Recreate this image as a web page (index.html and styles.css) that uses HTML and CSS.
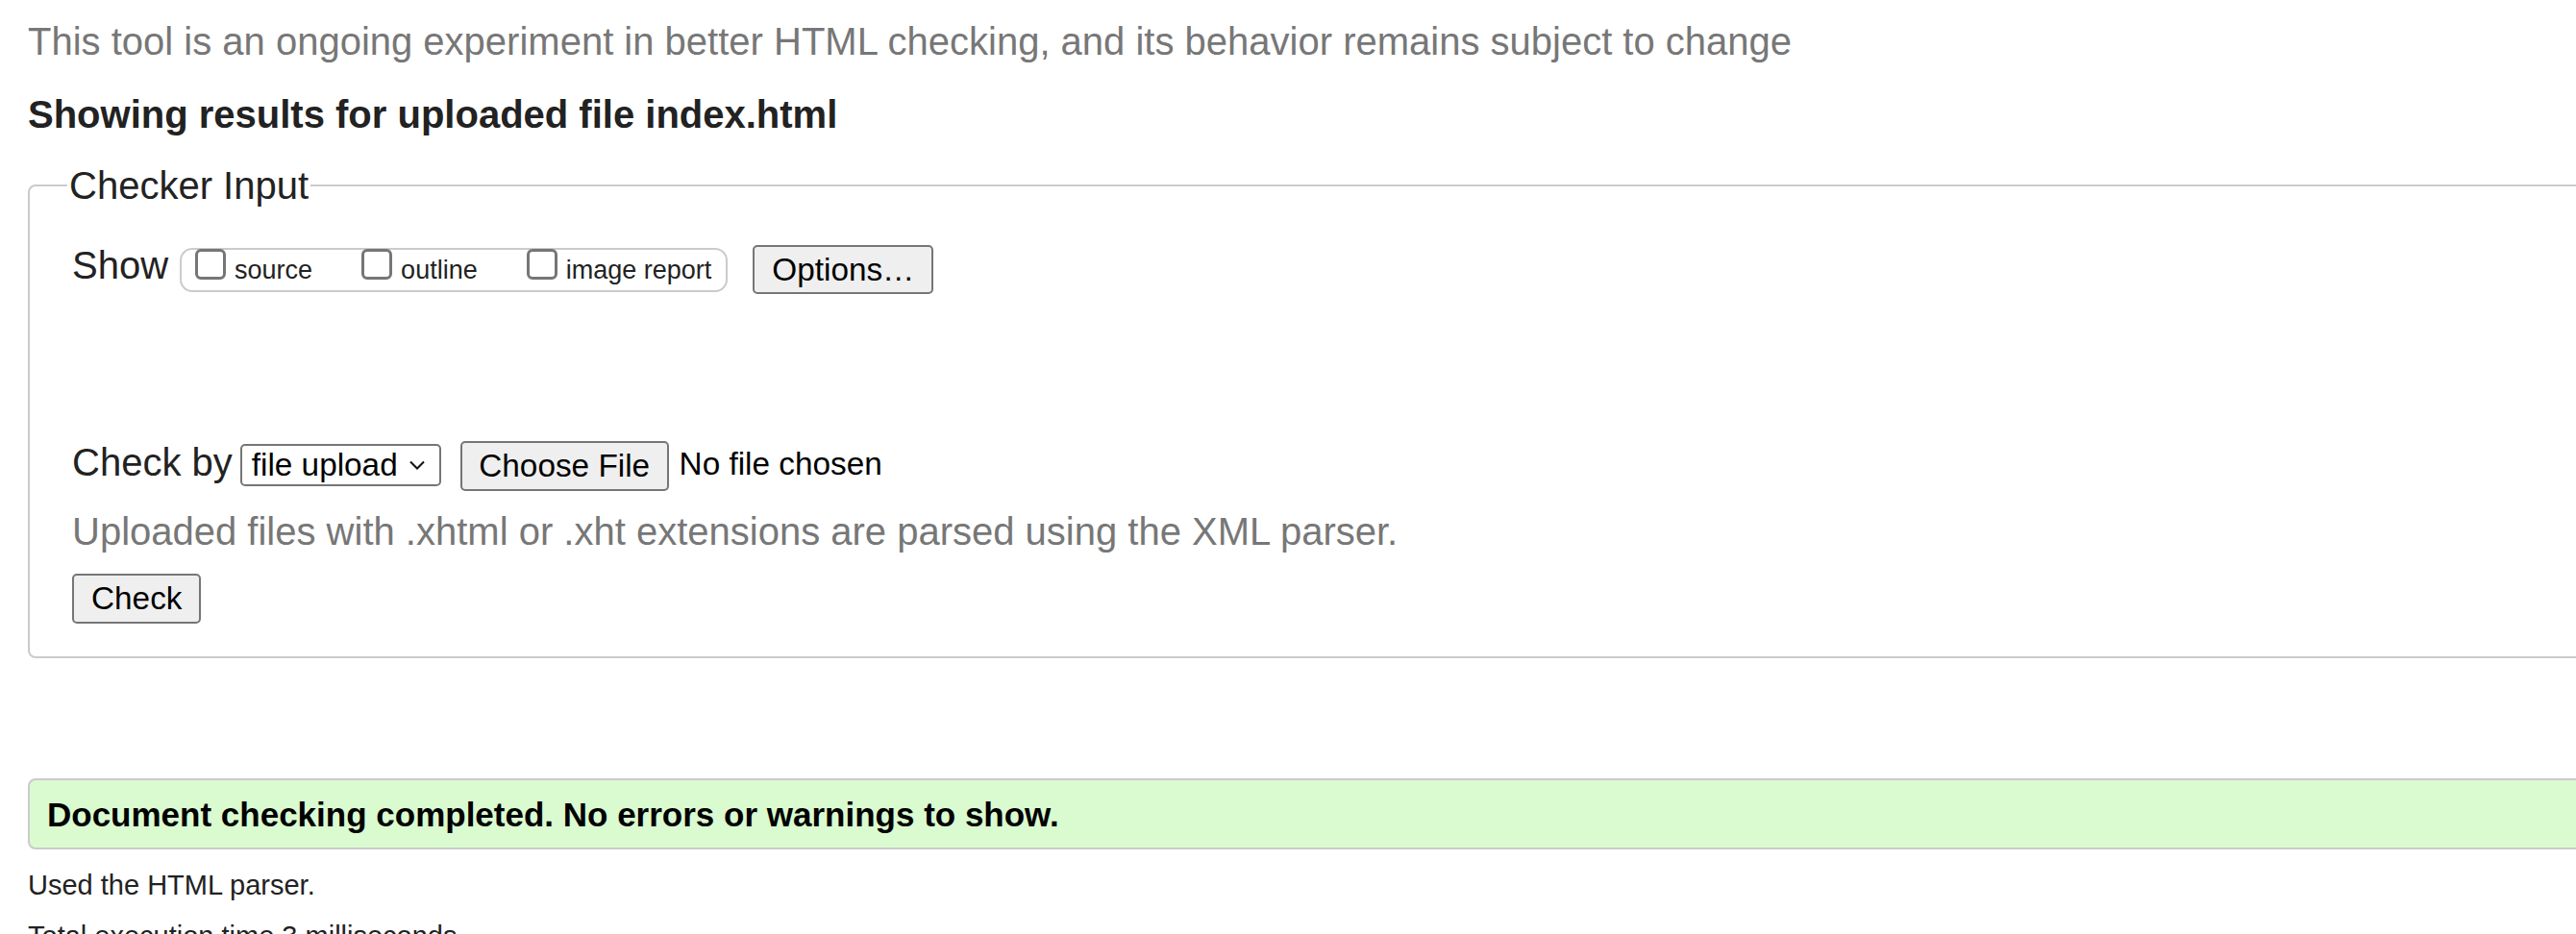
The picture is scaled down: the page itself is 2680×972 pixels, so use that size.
FILE: index.html
```html
<!DOCTYPE html>
<html lang="en">
<head>
<meta charset="utf-8">
<title>Nu Html Checker</title>
<link rel="stylesheet" href="styles.css">
</head>
<body>
<p class="experiment">This tool is an ongoing experiment in better HTML checking, and its behavior remains subject to change</p>
<h2 class="results-title">Showing results for uploaded file index.html</h2>
<form class="checker-form">
  <fieldset class="checker">
    <legend class="checker-legend">Checker Input</legend>
    <div class="show-row">
      <span class="row-label">Show</span>
      <span class="toggles">
        <label class="toggle"><input type="checkbox" class="box"><span class="toggle-text">source</span></label>
        <label class="toggle"><input type="checkbox" class="box"><span class="toggle-text">outline</span></label>
        <label class="toggle"><input type="checkbox" class="box"><span class="toggle-text">image report</span></label>
      </span>
      <button type="button" class="btn btn-options">Options…</button>
    </div>
    <div class="checkby-row">
      <span class="row-label">Check by</span>
      <span class="select">
        <span class="select-text">file upload</span>
        <svg class="chevron" width="16" height="10" viewBox="0 0 16 10"><polyline points="1,1.5 8,8.5 15,1.5" fill="none" stroke="#111" stroke-width="2"/></svg>
      </span>
      <button type="button" class="btn btn-file">Choose File</button>
      <span class="file-status">No file chosen</span>
    </div>
    <p class="hint">Uploaded files with .xhtml or .xht extensions are parsed using the XML parser.</p>
    <button type="button" class="btn btn-check">Check</button>
  </fieldset>
</form>
<div class="success">Document checking completed. No errors or warnings to show.</div>
<p class="stat stat-first">Used the HTML parser.</p>
<p class="stat">Total execution time 3 milliseconds.</p>
</body>
</html>
```
FILE: styles.css
```css
html {
  overflow: hidden;
}
body {
  margin: 0;
  padding: 20px 0 0 29px;
  font-family: "Liberation Sans", Arial, sans-serif;
  color: #222;
  background: #fff;
}
.experiment {
  margin: 0;
  font-size: 40px;
  line-height: 46px;
  color: #777;
  white-space: nowrap;
}
.results-title {
  margin: 30px 0 0;
  font-size: 40px;
  line-height: 46px;
  font-weight: bold;
  white-space: nowrap;
}
.checker-form {
  margin: 28px 0 0;
}
.checker {
  box-sizing: border-box;
  width: calc(100% + 80px);
  margin: 0;
  border: 2px solid #cbcbcb;
  border-radius: 8px;
  padding: 37px 0 34px 44px;
  min-inline-size: 0;
}
.checker-legend {
  font-size: 40px;
  line-height: 46px;
  padding: 0 2px;
  margin-left: -5px;
  color: #222;
}
.show-row {
  display: flex;
  align-items: flex-start;
}
.row-label {
  font-size: 40px;
  line-height: 46px;
  white-space: nowrap;
}
.show-row .row-label {
  margin-right: 12px;
}
.toggles {
  box-sizing: border-box;
  display: flex;
  align-items: flex-start;
  height: 46px;
  margin-top: 5px;
  padding: 0 15px 0 14px;
  border: 2px solid #cbcbcb;
  border-radius: 13px;
}
.toggle {
  display: flex;
  align-items: flex-start;
}
.toggle + .toggle {
  margin-left: 51px;
}
.box {
  appearance: none;
  -webkit-appearance: none;
  box-sizing: border-box;
  width: 32px;
  height: 32px;
  margin: -1px 0 0;
  border: 3px solid #767676;
  border-radius: 6px;
  background: #fff;
}
.toggle-text {
  margin: 6px 0 0 9px;
  font-size: 27px;
  line-height: 31px;
  white-space: nowrap;
}
.btn {
  box-sizing: border-box;
  height: 52px;
  padding: 0 18px;
  border: 2px solid #767676;
  border-radius: 5px;
  background: #efefef;
  color: #000;
  font-family: "Liberation Sans", Arial, sans-serif;
  font-size: 33.33px;
  line-height: normal;
  white-space: nowrap;
}
.btn-options {
  height: 51px;
  margin: 2px 0 0 26px;
}
.checkby-row {
  display: flex;
  align-items: flex-start;
  margin-top: 152px;
}
.checkby-row .row-label {
  margin-right: 8px;
}
.select {
  box-sizing: border-box;
  display: flex;
  align-items: center;
  width: 209px;
  height: 44px;
  margin-top: 4px;
  padding: 0 15px 0 10px;
  border: 2px solid #767676;
  border-radius: 5px;
  background: #fff;
  color: #000;
}
.select-text {
  font-size: 33.33px;
  line-height: normal;
  white-space: nowrap;
}
.chevron {
  display: block;
  margin-left: auto;
}
.btn-file {
  margin: 1px 0 0 20px;
  padding: 0 17.5px;
}
.file-status {
  margin: 6px 0 0 11px;
  font-size: 33.33px;
  line-height: 38px;
  color: #000;
  white-space: nowrap;
}
.hint {
  margin: 19px 0 0;
  font-size: 40px;
  line-height: 46px;
  color: #777;
  white-space: nowrap;
}
.btn-check {
  display: block;
  margin-top: 21px;
}
.success {
  box-sizing: border-box;
  width: calc(100% + 80px);
  margin-top: 125px;
  padding: 15.5px 18px 14.5px;
  border: 2px solid #cbcbcb;
  border-radius: 8px;
  background: #dafad0;
  color: #000;
  font-size: 35px;
  line-height: 40px;
  font-weight: bold;
  white-space: nowrap;
}
.stat {
  margin: 19px 0 0;
  font-size: 29px;
  line-height: 34px;
  white-space: nowrap;
}
.stat-first {
  margin-top: 20px;
}
```
